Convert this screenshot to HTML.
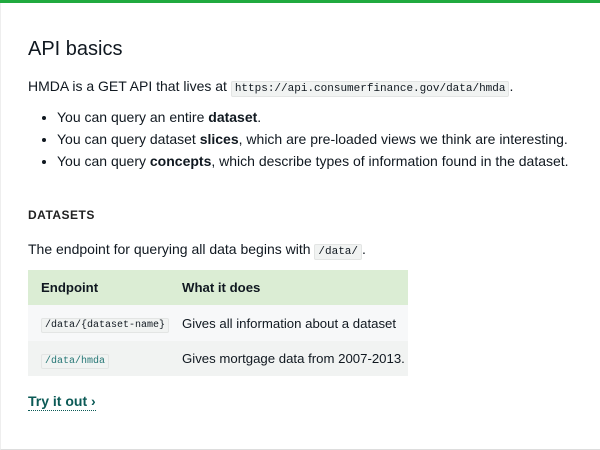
<!DOCTYPE html>
<html><head><style>
body{margin:0;width:600px;height:450px;overflow:hidden;background:#fff;font-family:"Liberation Sans",sans-serif;color:#101820}
.frame{position:absolute;left:0;top:0;width:599px;height:449px;border-right:1px solid #ddd;border-bottom:1px solid #ddd;border-left:1px solid #eee}
.bar{position:absolute;left:0;top:0;width:600px;height:3px;background:#20aa3f}
.a{position:absolute;white-space:nowrap}
code{font-family:"Liberation Mono",monospace;font-size:11px;background:#f1f3f2;border:1px solid #e3e5e4;border-radius:2px;padding:1px 3px;white-space:nowrap}
h1{position:absolute;left:28px;top:38px;margin:0;font-weight:normal;font-size:20px}
ul{position:absolute;left:38px;top:106px;margin:0;padding:0 0 0 19px;font-size:14px;line-height:22px;white-space:nowrap}
table{position:absolute;left:28px;top:270px;width:380px;table-layout:fixed;border-collapse:collapse;font-size:13.2px;white-space:nowrap}
td,th{text-align:left;padding:0 0 0 13px;overflow:hidden}
th{background:#dbedd4;height:35px;font-weight:bold}
tr.r1 td{background:#f7f8f9;height:36px}
tr.r2 td{background:#f1f3f2;height:35px}
</style></head><body>
<div class="frame"></div><div class="bar"></div>
<h1>API basics</h1>
<div class="a" style="left:28px;top:78px;font-size:14px">HMDA is a GET API that lives at <code>https://api.consumerfinance.gov/data/hmda</code>.</div>
<ul>
<li>You can query an entire <b>dataset</b>.</li>
<li>You can query dataset <b>slices</b>, which are pre-loaded views we think are interesting.</li>
<li>You can query <b>concepts</b>, which describe types of information found in the dataset.</li>
</ul>
<div class="a" style="left:28px;top:208px;font-size:12px;letter-spacing:.5px;font-weight:bold;color:#222">DATASETS</div>
<div class="a" style="left:28px;top:241px;font-size:14px">The endpoint for querying all data begins with <code>/data/</code>.</div>
<table>
<tr><th style="width:128px">Endpoint</th><th>What it does</th></tr>
<tr class="r1"><td><code style="font-size:10px">/data/{dataset-name}</code></td><td>Gives all information about a dataset</td></tr>
<tr class="r2"><td><code style="font-size:10px;color:#257675">/data/hmda</code></td><td>Gives mortgage data from 2007-2013.</td></tr>
</table>
<div class="a" style="left:28px;top:393px;font-size:14px;font-weight:bold;color:#0b5a56;border-bottom:1px dotted #0b5a56;padding-bottom:1px">Try it out ›</div>
</body></html>
